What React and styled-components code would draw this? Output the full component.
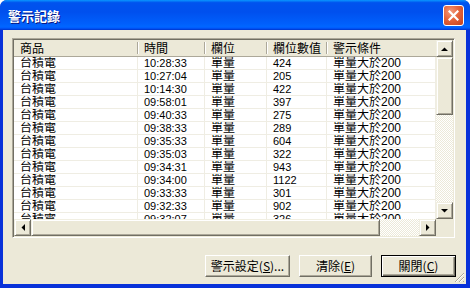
import React from 'react';
import styled, { createGlobalStyle } from 'styled-components';

const GlobalStyle = createGlobalStyle`
  html, body { margin: 0; padding: 0; background: #fff; }
  body { font-family: "Liberation Sans", "Noto Sans CJK TC", sans-serif; }
`;

const FACE = '#ECE9D8';

const Window = styled.div`
  width: 470px;
  height: 288px;
  display: flex;
  flex-direction: column;
  background: #0831d9;
  border-radius: 7px 7px 0 0;
  overflow: hidden;
`;

const TitleBar = styled.div`
  height: 30px;
  flex: none;
  display: flex;
  align-items: center;
  justify-content: space-between;
  padding: 0 6px 0 8px;
  background: linear-gradient(to bottom, #0997ff 0%, #0053ee 9%, #0050ee 40%, #0060fc 80%, #0066ff 88%, #005bff 94%, #003dd7 97%, #003dd7 100%);
`;

const Title = styled.span`
  color: #fff;
  font-family: "Noto Sans CJK TC", sans-serif;
  font-weight: bold;
  font-size: 13px;
  letter-spacing: 0px;
  text-shadow: 1px 1px 0 #0a1883;
  margin-top: 1px;
`;

const CloseButton = styled.div`
  width: 21px;
  height: 21px;
  box-sizing: border-box;
  border: 1px solid #fff;
  border-radius: 3px;
  background: radial-gradient(circle at 35% 30%, #f29a7c 0%, #e5643b 45%, #c4411c 100%);
  display: flex;
  align-items: center;
  justify-content: center;
  margin-top: 1px;
`;

const Body = styled.div`
  flex: 1;
  position: relative;
  margin: 0 4px 4px 3px;
  background: ${FACE};
  padding: 8px 11px 0 9px;
  display: flex;
  flex-direction: column;
`;

const ListFrame = styled.div`
  height: 196px;
  border: 1px solid;
  border-color: #aca899 #fff #fff #aca899;
  box-shadow: inset 1px 1px 0 #716f64, inset -1px -1px 0 ${FACE};
  padding: 1px;
  display: grid;
  grid-template-columns: 1fr 17px;
  grid-template-rows: 1fr 17px;
`;

const Content = styled.div`
  overflow: hidden;
  background: #fff;
`;

const COLS = '124px 67px 62px 60px 1fr';

const HeaderRow = styled.div`
  display: grid;
  grid-template-columns: ${COLS};
  height: 17px;
  background: ${FACE};
  box-shadow: inset 0 -1px 0 #aca899;
`;

const HeaderCell = styled.div`
  position: relative;
  padding-left: 6px;
  font-family: "Noto Sans CJK TC", sans-serif;
  font-size: 12px;
  line-height: 16px;
  color: #000;
  white-space: nowrap;
  &::after {
    content: '';
    display: ${p => (p.$last ? 'none' : 'block')};
    position: absolute;
    right: 0;
    top: 2px;
    bottom: 3px;
    width: 1px;
    background: #aca899;
    box-shadow: 1px 0 0 #fff;
  }
`;

const DataRow = styled.div`
  display: grid;
  grid-template-columns: ${COLS};
  height: 13px;
  border-bottom: 0;
  box-shadow: inset 0 -1px 0 #efede3;
`;

const Cell = styled.div`
  padding-left: ${p => (p.$first ? 6 : 6)}px;
  font-size: ${p => (p.$num ? 11 : 12)}px;
  font-family: ${p => (p.$num ? '"Liberation Sans", sans-serif' : '"Liberation Sans", "Noto Sans CJK TC", sans-serif')};
  line-height: 13px;
  color: #000;
  white-space: nowrap;
  overflow: hidden;
  box-shadow: inset -1px 0 0 #efede3;
`;

const Track = styled.div`
  display: flex;
  flex-direction: ${p => (p.$vertical ? 'column' : 'row')};
  background: repeating-conic-gradient(#fff 0 25%, ${FACE} 0 50%) 0 0 / 2px 2px;
`;

const ScrollBtn = styled.div`
  flex: none;
  width: ${p => p.$w || 17}px;
  height: ${p => p.$h || 17}px;
  box-sizing: border-box;
  background: ${FACE};
  border: 1px solid;
  border-color: #f1efe2 #716f64 #716f64 #f1efe2;
  box-shadow: inset 1px 1px 0 #fff, inset -1px -1px 0 #aca899;
  display: flex;
  align-items: center;
  justify-content: center;
`;

const Spacer = styled.div`
  flex: 1;
`;

const Corner = styled.div`
  background: ${FACE};
`;

const ButtonRow = styled.div`
  display: flex;
  justify-content: flex-end;
  gap: 9px;
  margin-top: 17px;
  margin-right: -1px;
`;

const Button = styled.div`
  width: ${p => p.$w}px;
  height: 22px;
  box-sizing: border-box;
  background: ${FACE};
  border: 1px solid;
  border-color: ${p => (p.$default ? '#000' : '#fff #716f64 #716f64 #fff')};
  box-shadow: ${p =>
    p.$default
      ? 'inset 1px 1px 0 #fff, inset -1px -1px 0 #716f64, inset -2px -2px 0 #aca899'
      : 'inset -1px -1px 0 #aca899'};
  display: flex;
  align-items: center;
  justify-content: center;
  font-family: "Noto Sans CJK TC", sans-serif;
  font-size: 12px;
  color: #000;
  padding-bottom: 1px;
  u { text-decoration: underline; text-underline-offset: 1px; }
`;

const Grip = styled.svg`
  position: absolute;
  right: 1px;
  bottom: 1px;
`;

const Arrow = ({ dir }) => {
  const pts = {
    up: '0,4 7,4 3.5,0.5',
    down: '0,0 7,0 3.5,3.5',
    left: '4,0 4,7 0.5,3.5',
    right: '0,0 0,7 3.5,3.5',
  }[dir];
  const v = dir === 'up' || dir === 'down';
  return (
    <svg width={v ? 7 : 4} height={v ? 4 : 7} viewBox={v ? '0 0 7 4' : '0 0 4 7'}>
      <polygon points={pts} fill="#000" />
    </svg>
  );
};

const rows = [
  ['10:28:33', '424'],
  ['10:27:04', '205'],
  ['10:14:30', '422'],
  ['09:58:01', '397'],
  ['09:40:33', '275'],
  ['09:38:33', '289'],
  ['09:35:33', '604'],
  ['09:35:03', '322'],
  ['09:34:31', '943'],
  ['09:34:00', '1122'],
  ['09:33:33', '301'],
  ['09:32:33', '902'],
  ['09:32:07', '326'],
];

const headers = ['商品', '時間', '欄位', '欄位數值', '警示條件'];

export default function App() {
  return (
    <>
      <GlobalStyle />
      <Window>
        <TitleBar>
          <Title>警示記錄</Title>
          <CloseButton>
            <svg width="11" height="11" viewBox="0 0 11 11">
              <path d="M1.5 1.5 L9.5 9.5 M9.5 1.5 L1.5 9.5" stroke="#fff" strokeWidth="2.2" strokeLinecap="square" />
            </svg>
          </CloseButton>
        </TitleBar>
        <Body>
          <ListFrame>
            <Content>
              <HeaderRow>
                {headers.map((h, i) => (
                  <HeaderCell key={h} $last={i === headers.length - 1}>{h}</HeaderCell>
                ))}
              </HeaderRow>
              {rows.map(([t, v]) => (
                <DataRow key={t}>
                  <Cell $first>台積電</Cell>
                  <Cell $num>{t}</Cell>
                  <Cell>單量</Cell>
                  <Cell $num>{v}</Cell>
                  <Cell>單量大於200</Cell>
                </DataRow>
              ))}
            </Content>
            <Track $vertical>
              <ScrollBtn><Arrow dir="up" /></ScrollBtn>
              <ScrollBtn $h={58} />
              <Spacer />
              <ScrollBtn><Arrow dir="down" /></ScrollBtn>
            </Track>
            <Track>
              <ScrollBtn><Arrow dir="left" /></ScrollBtn>
              <ScrollBtn $w={349} />
              <Spacer />
              <ScrollBtn><Arrow dir="right" /></ScrollBtn>
            </Track>
            <Corner />
          </ListFrame>
          <ButtonRow>
            <Button $w={85}>警示設定(<u>S</u>)...</Button>
            <Button $w={73}>清除(<u>E</u>)</Button>
            <Button $w={75} $default>關閉(<u>C</u>)</Button>
          </ButtonRow>
          <Grip width="11" height="11" viewBox="0 0 11 11">
            <path d="M10 1 L1 10 M10 5 L5 10 M10 9 L9 10" stroke="#aca899" strokeWidth="1" />
            <path d="M10 2 L2 10 M10 6 L6 10" stroke="#fff" strokeWidth="1" />
          </Grip>
        </Body>
      </Window>
    </>
  );
}
